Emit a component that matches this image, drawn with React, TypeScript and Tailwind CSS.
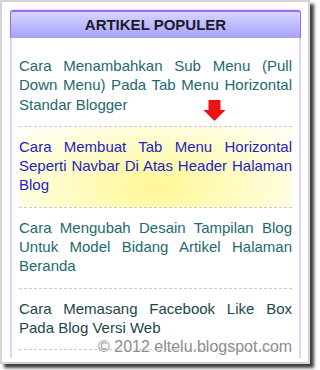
const items = [
  { text: "Cara Menambahkan Sub Menu (Pull Down Menu) Pada Tab Menu Horizontal Standar Blogger", color: "text-[#236970]", hot: false },
  { text: "Cara Membuat Tab Menu Horizontal Seperti Navbar Di Atas Header Halaman Blog", color: "text-[#2424c2]", hot: true },
  { text: "Cara Mengubah Desain Tampilan Blog Untuk Model Bidang Artikel Halaman Beranda", color: "text-[#236970]", hot: false },
  { text: "Cara Memasang Facebook Like Box Pada Blog Versi Web", color: "text-[#1d464c]", hot: false },
]

export default function App() {
  return (
    <div className="relative h-[370px] w-[315px] bg-white font-['Liberation_Sans',Arial,sans-serif]">
      <div className="h-[364px] w-[310px] overflow-hidden border-2 border-[#d4d4d4] bg-white pl-[8px] pt-[8px] shadow-[4px_4px_3px_rgba(0,0,0,0.75)]">
        <div className="w-[291px]">
          <div className="flex h-[28px] items-center justify-center rounded-t-[3px] border-x border-t-2 border-[#9a6cef] bg-gradient-to-b from-[#d8d4ff] to-[#a5a2fa] text-[15px] font-bold text-[#1b1b2b] shadow-[0_-1px_2px_#f2d9ff]">
            ARTIKEL POPULER
          </div>
          <ul className="border-x-2 border-[#ddd5f8] px-[7px] pb-[8px] pt-[8px]">
            {items.map((item, i) => (
              <li
                key={i}
                className={
                  "border-b border-dashed border-[#cacaca] pb-[12px] pt-[10px] text-justify text-[15px] leading-[19.3px] " +
                  item.color +
                  (item.hot
                    ? " bg-[radial-gradient(ellipse_75%_120%_at_50%_75%,#fff794_0%,#fffbc2_40%,#fffee8_75%,#ffffff_100%)]"
                    : "")
                }
              >
                {item.text}
              </li>
            ))}
          </ul>
        </div>
      </div>

      {/* red arrow pointing at the highlighted post */}
      <svg className="absolute left-[203px] top-[100px]" width="23" height="22" viewBox="0 0 22 22">
        <polygon points="5,0 17,0 17,10 22,10 11,21 0,10 5,10" fill="#ee1111" />
      </svg>

      <span className="absolute left-[98px] top-[339px] text-[16px] leading-none text-[#8d8d8d] [text-shadow:0_0_2px_#ffffff]">
        © 2012 eltelu.blogspot.com
      </span>
    </div>
  )
}
